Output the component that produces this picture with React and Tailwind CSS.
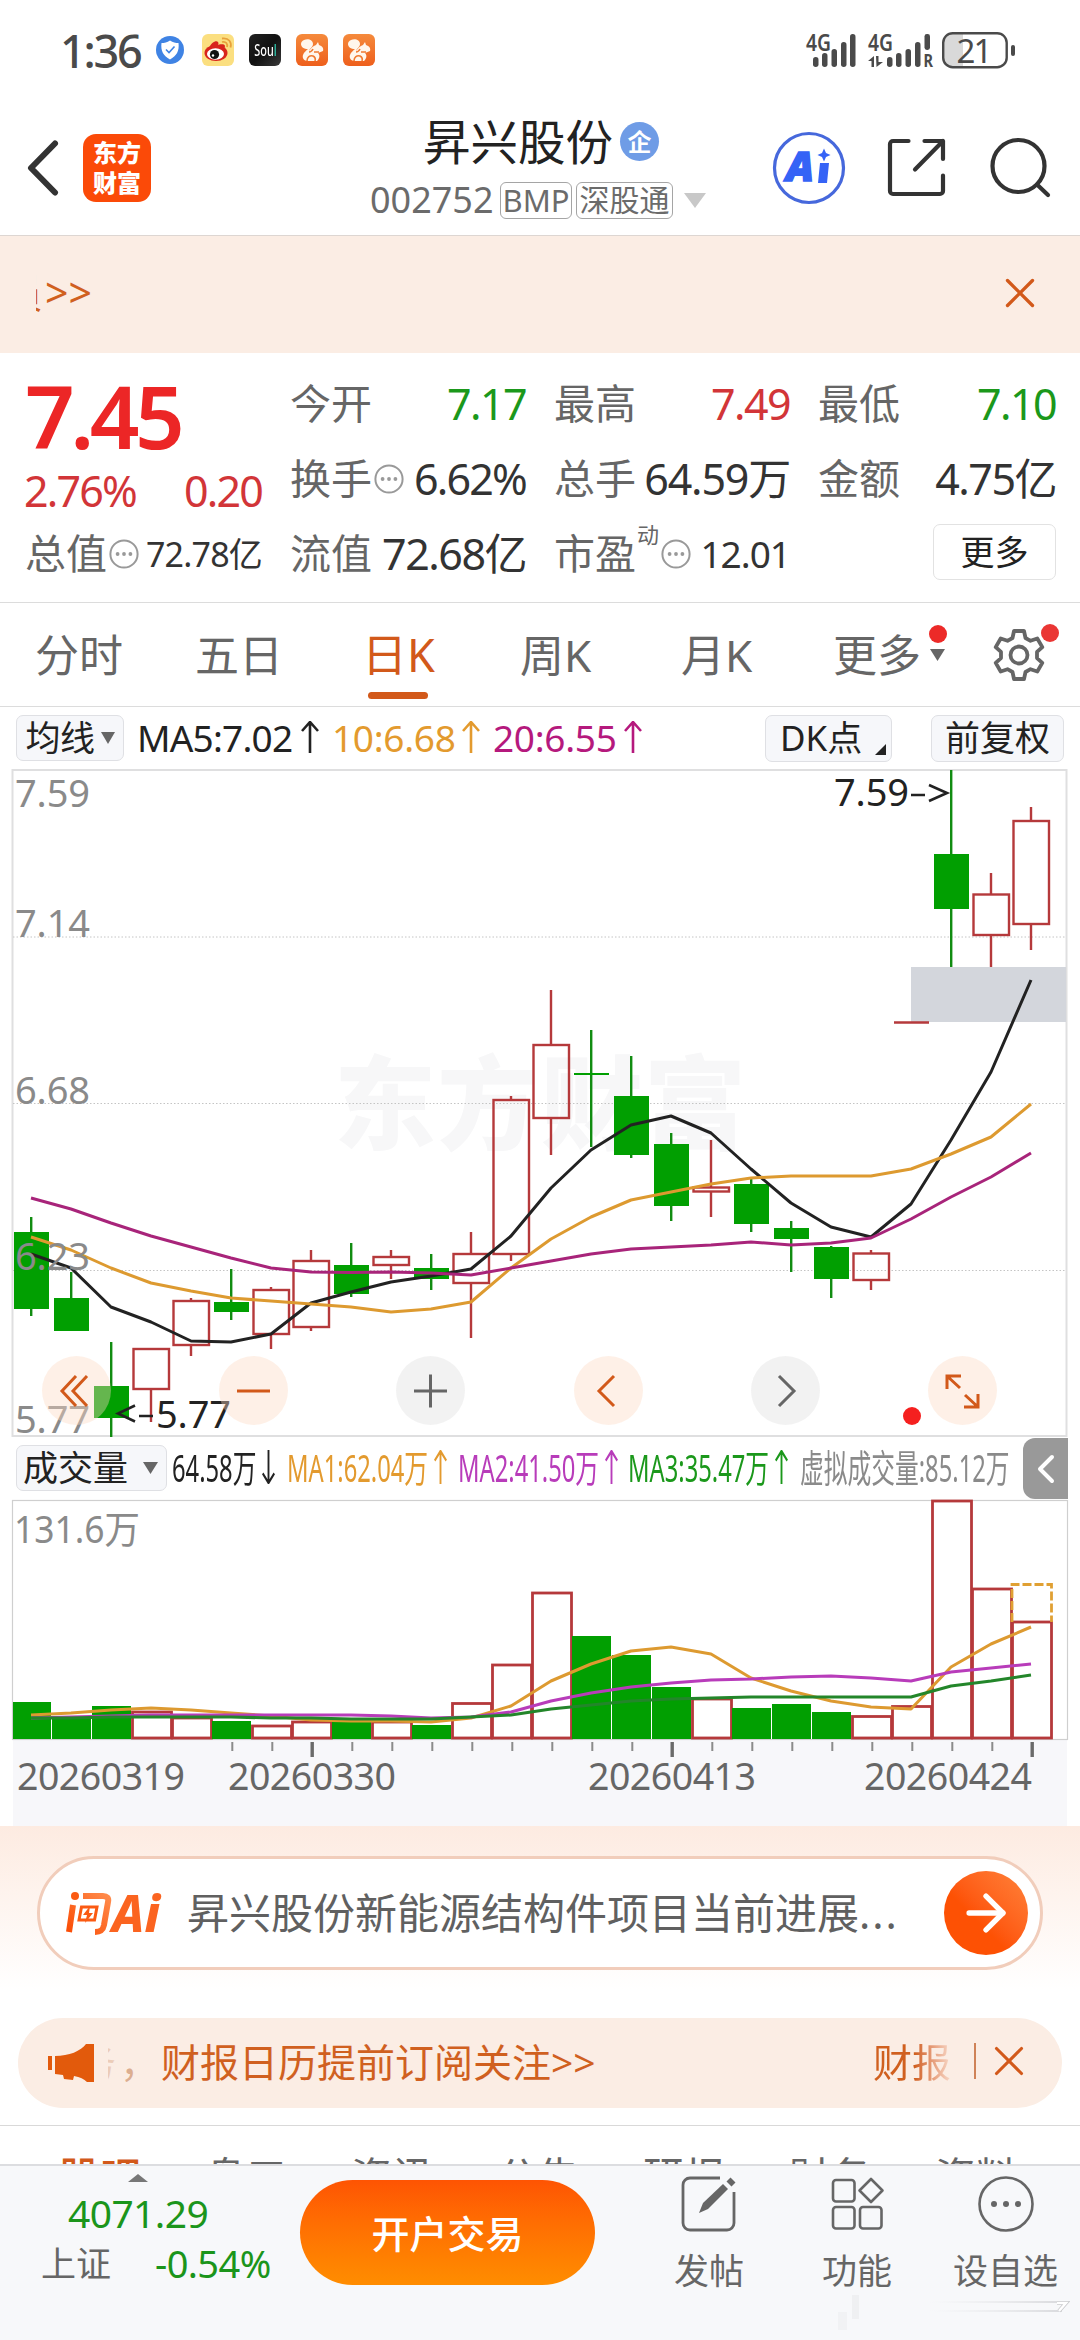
import { ArrowRight, X } from "lucide-react";

const RED = "#b5393b";
const GREEN = "#019f01";

// [type, high, bodyTop, bodyBottom, low]
const candles = [
  ["g", 1217, 1232, 1309, 1316],
  ["g", 1272, 1298, 1331, 1331],
  ["g", 1342, 1386, 1418, 1437],
  ["r", 1349, 1349, 1389, 1422],
  ["r", 1298, 1301, 1345, 1356],
  ["g", 1269, 1302, 1312, 1320],
  ["r", 1287, 1290, 1334, 1349],
  ["r", 1250, 1261, 1327, 1331],
  ["g", 1243, 1265, 1294, 1297],
  ["r", 1250, 1257, 1265, 1279],
  ["g", 1254, 1268, 1279, 1290],
  ["r", 1232, 1254, 1283, 1338],
  ["r", 1096, 1100, 1254, 1261],
  ["r", 990, 1045, 1118, 1155],
  ["g", 1030, 1073, 1075, 1147],
  ["g", 1056, 1096, 1155, 1158],
  ["g", 1133, 1144, 1206, 1221],
  ["r", 1140, 1187.5, 1191.5, 1217],
  ["g", 1178, 1184, 1224, 1232],
  ["g", 1221, 1228, 1239, 1272],
  ["g", 1246, 1247, 1279, 1298],
  ["r", 1250, 1253.5, 1280, 1290],
  ["flat", 1022.5, 1022.5, 1022.5, 1022.5],
  ["g", 770, 854, 909, 967],
  ["r", 873, 894.5, 935, 967],
  ["r", 807, 821, 924, 950],
];

const ma5 = [1254, 1268, 1307, 1322, 1341, 1342, 1334, 1303, 1292, 1282, 1276, 1269, 1236, 1188, 1150, 1125, 1116, 1133, 1169, 1203, 1227, 1237, 1204, 1140, 1072, 980];
const ma10 = [1237, 1250, 1268, 1283, 1291, 1298, 1301, 1304, 1307, 1312, 1309, 1302, 1268, 1239, 1217, 1200, 1192, 1184, 1178, 1176, 1176, 1176, 1169, 1154, 1137, 1104];
const ma20 = [1198, 1209, 1223, 1236, 1247, 1258, 1268, 1272, 1272.5, 1272, 1273, 1275, 1268, 1261, 1254, 1249, 1247, 1245, 1242, 1245, 1243, 1238, 1219, 1197, 1177, 1153];

const volumes = [
  ["g", 1702], ["g", 1717], ["g", 1706], ["r", 1712], ["r", 1718], ["g", 1721], ["r", 1726],
  ["r", 1722], ["g", 1721], ["r", 1722], ["g", 1725], ["r", 1703.5], ["r", 1665], ["r", 1593],
  ["g", 1636], ["g", 1655], ["g", 1687], ["r", 1699], ["g", 1708], ["g", 1704], ["g", 1712],
  ["r", 1716.5], ["r", 1706.5], ["r", 1501], ["r", 1589], ["r", 1622],
];

const vma1 = [1715, 1713, 1710, 1708, 1710, 1713, 1716, 1720, 1721, 1721, 1722, 1718, 1706, 1681, 1664, 1651, 1647, 1654, 1678, 1691, 1701, 1707, 1709, 1667, 1644, 1627];
const vma2 = [1718, 1717, 1716, 1715, 1715, 1715, 1715, 1715, 1715, 1716, 1718, 1717, 1712, 1701, 1693, 1687, 1683, 1680, 1679, 1677, 1676, 1678, 1681, 1672, 1668, 1664];
const vma3 = [1718, 1718, 1717, 1717, 1717, 1717, 1718, 1718, 1719, 1719, 1719, 1717, 1715, 1709, 1705, 1701, 1699, 1698, 1697, 1697, 1697, 1697, 1697, 1686, 1681, 1675];

const px = (i) => 31 + i * 40;
const toPoints = (list) => list.map((y, i) => `${px(i)},${y}`).join(" ");

function Arrow({ down, className }) {
  return (
    <svg viewBox="0 0 18 32" preserveAspectRatio="none" className={className} fill="none" stroke="currentColor" strokeWidth="2.6">
      <path d={down ? "M9 0V31M1 22l8 9 8-9" : "M9 32V1M1 10l8-9 8 9"} />
    </svg>
  );
}

function Triangle({ className, up }) {
  return (
    <svg viewBox="0 0 20 14" preserveAspectRatio="none" className={className} fill="currentColor">
      <path d={up ? "M0 14h20L10 0z" : "M0 0h20L10 14z"} />
    </svg>
  );
}

function Info({ className = "" }) {
  return (
    <svg viewBox="0 0 30 30" className={`h-[30px] w-[30px] shrink-0 ${className}`}>
      <circle cx="15" cy="15" r="13.6" fill="none" stroke="#999" strokeWidth="2" />
      <circle cx="8.6" cy="15" r="1.9" fill="#999" />
      <circle cx="15" cy="15" r="1.9" fill="#999" />
      <circle cx="21.4" cy="15" r="1.9" fill="#999" />
    </svg>
  );
}

function Squirrel() {
  return (
    <svg viewBox="0 0 32 32" className="h-8 w-8">
      <defs>
        <linearGradient id="uc" x1="0" y1="0" x2="0" y2="1">
          <stop offset="0" stopColor="#f58a3c" />
          <stop offset="1" stopColor="#ee5f1c" />
        </linearGradient>
      </defs>
      <rect width="32" height="32" rx="6" fill="url(#uc)" />
      <path d="M8 6c4-2 9 0 9 4 0 3-3 4-4 7 2-3 4-5 7-6l2-3 1 3c3 1 5 3 4 6l-5 2c2 2 2 5-1 8h-9c-4 0-6-3-5-6 1-3 3-4 5-6-4 0-7-2-7-5 0-2 1-3 3-4z" fill="#fff6ec" />
      <path d="M13 18c2 0 3-1 4-3M11 27c0-4 3-6 6-5 2 1 3 2 2 5M23 18h-5" fill="none" stroke="#f07a30" strokeWidth="1.600" />
    </svg>
  );
}

function StatusBar() {
  return (
    <div className="flex h-[100px] items-center pl-[60px] text-[#4a4a4a]">
      <span className="w-[96px] text-[45px] font-medium leading-none tracking-[-2.2px]">1:36</span>
      <svg viewBox="0 0 28 28" className="h-7 w-7">
        <circle cx="14" cy="14" r="14" fill="#3f83e4" />
        <path d="M14 4.500c3 2 5.500 2.500 8.500 2.500 1 8-2 13-8.500 16.500C7.500 20 4.500 15 5.500 7 8.500 7 11 6.500 14 4.500z" fill="#fff" />
        <path d="M10 13.500l3 3 5.500-6" fill="none" stroke="#3f83e4" strokeWidth="1.600" />
      </svg>
      <svg viewBox="0 0 32 32" className="ml-[18px] h-8 w-8">
        <rect width="32" height="32" rx="6" fill="#fbdf80" />
        <ellipse cx="14" cy="19" rx="11.500" ry="8" fill="#d8241c" />
        <path d="M7 14c2-5 7-8 9-6 1 1 0 3 0 3s6-2 7 1l-1 4z" fill="#d8241c" />
        <ellipse cx="13.500" cy="20" rx="8.500" ry="5.800" fill="#fff" />
        <circle cx="12.500" cy="20.500" r="4.600" fill="#111" />
        <circle cx="11" cy="21.500" r="1.200" fill="#fff" />
        <path d="M20 8c4-1 6 2 5 5M20 4.500c7-1 10 4 8.500 9" fill="none" stroke="#e8a13a" strokeWidth="1.800" />
      </svg>
      <div className="ml-[15px] flex h-8 w-8 items-center justify-center rounded-[6px] bg-linear-to-br from-[#222] via-[#111] to-[#3a3a3a]">
        <span className="inline-block scale-x-[0.68] text-[16px] font-medium leading-none text-white">
          Sou<span className="text-[#2fd0b5]">l</span>
        </span>
      </div>
      <div className="ml-[15px] flex gap-[15px]">
        <Squirrel />
        <Squirrel />
      </div>

      <svg viewBox="806 30 212 40" className="ml-[431px] h-10 w-[212px] overflow-visible" fill="#4a4a4a">
        <text x="806" y="51" fontSize="23" fontWeight="600" textLength="25" lengthAdjust="spacingAndGlyphs">4G</text>
        <rect x="813" y="57" width="5.500" height="10" rx="2.700" />
        <rect x="822" y="53" width="5.500" height="14" rx="2.700" />
        <rect x="831.500" y="49" width="5.500" height="18" rx="2.700" />
        <rect x="841" y="42" width="5.500" height="25" rx="2.700" />
        <rect x="850" y="34" width="5.500" height="33" rx="2.700" />
        <text x="868" y="51" fontSize="23" fontWeight="600" textLength="25" lengthAdjust="spacingAndGlyphs">4G</text>
        <path d="M868 61l6-5v11h-2.500v-6zM876 56h2.500v6h4.500l-6.500 5z" />
        <rect x="887" y="57" width="5.500" height="10" rx="2.700" />
        <rect x="896" y="53" width="5.500" height="14" rx="2.700" />
        <rect x="905.500" y="49" width="5.500" height="18" rx="2.700" />
        <rect x="915" y="42" width="5.500" height="25" rx="2.700" />
        <rect x="924.500" y="34" width="5.500" height="16" rx="2.400" />
        <text x="923.500" y="67" fontSize="18" fontWeight="700" textLength="9.500" lengthAdjust="spacingAndGlyphs">R</text>
        <path d="M952 34h11v33h-11a8 8 0 0 1-8-8V42a8 8 0 0 1 8-8z" fill="#d9d9d9" />
        <rect x="943.200" y="33.200" width="63.500" height="34" rx="9.500" fill="none" stroke="#4a4a4a" strokeWidth="2.400" />
        <text x="956.500" y="62.500" fontSize="33" textLength="36">21</text>
        <rect x="1011" y="45" width="4" height="11" rx="2" />
      </svg>
    </div>
  );
}

function Header() {
  return (
    <div className="flex h-[136px] items-center border-b border-[#ddd6d2] pl-[27px]">
      <svg viewBox="0 0 32 56" className="h-14 w-8" fill="none" stroke="#333" strokeWidth="6" strokeLinecap="round" strokeLinejoin="round">
        <path d="M28 3.500L4 28l24 24.500" />
      </svg>
      <div className="ml-6 flex h-[68px] w-[68px] flex-col items-center justify-center rounded-[13px] bg-[#fb4a08] text-[24px] font-black leading-[30px] text-white">
        <span>东方</span>
        <span>财富</span>
      </div>
      <div className="ml-[219px] w-[337px]">
        <div className="ml-[53px] flex h-[50px] items-center">
          <span className="whitespace-nowrap text-[47.500px] leading-none text-[#222]">昇兴股份</span>
          <span className="ml-[7px] flex h-[39px] w-[39px] shrink-0 items-center justify-center rounded-full bg-[#6f9ce6] text-[24px] font-bold leading-none text-white">企</span>
        </div>
        <div className="mt-[15px] flex h-[37px] items-center leading-none text-[#6b6b6b]">
          <span className="w-[130px] text-[36px]">002752</span>
          <span className="flex h-[37px] w-[72px] items-center justify-center rounded-[6px] border-[1.5px] border-[#a5a5a5] text-[31px]">BMP</span>
          <span className="ml-1 flex h-[37px] w-[97px] items-center justify-center whitespace-nowrap rounded-[6px] border-[1.5px] border-[#a5a5a5] text-[30px]">深股通</span>
          <Triangle className="ml-[11px] h-[15px] w-[22px] text-[#c8c8c8]" />
        </div>
      </div>
      <svg viewBox="772 131 74 74" className="ml-[65px] h-[74px] w-[74px]">
        <circle cx="809" cy="168" r="34.500" fill="#fff" stroke="#4668dc" strokeWidth="3.200" />
        <text x="786" y="181" fontSize="41" fontWeight="900" fontStyle="italic" fill="#3563f6" stroke="#3563f6" strokeWidth="1.500" textLength="28" lengthAdjust="spacingAndGlyphs">A</text>
        <path d="M820 163h9l-2 20h-9zM824 148.500l2 4.500 4.500 2-4.500 2-2 4.500-2-4.500-4.500-2 4.500-2z" fill="#3563f6" />
      </svg>
      <svg viewBox="886 138 62 62" className="ml-[40px] h-[62px] w-[62px]" fill="none" stroke="#333" strokeWidth="4.200" strokeLinecap="round" strokeLinejoin="round">
        <path d="M908.500 142H893a3 3 0 0 0-3 3v47a3 3 0 0 0 3 3h47a3 3 0 0 0 3-3v-15.500M924.500 142H943v18M943 142l-28 28.500" />
      </svg>
      <svg viewBox="990 136 62 64" className="ml-[42px] h-16 w-[62px]" fill="none" stroke="#333" strokeWidth="4.200" strokeLinecap="round">
        <circle cx="1018.500" cy="166" r="26" />
        <path d="M1037 184.500l11 10.500" />
      </svg>
    </div>
  );
}

function Stat({ label, info, sup, children }) {
  return (
    <div className="flex h-[75px] items-center whitespace-nowrap leading-none">
      <span className="text-[41px] text-[#666]">{label}</span>
      {sup && <span className="mb-[40px] ml-px text-[22px] text-[#666]">{sup}</span>}
      {info && <Info className="ml-[2px]" />}
      <span className="ml-auto">{children}</span>
    </div>
  );
}

function Quote() {
  return (
    <div className="flex h-[249px] gap-7 pl-[25px] pt-[13px] leading-none">
      <div className="w-[237px]">
        <div className="flex h-[99px] items-center text-[87px] font-semibold tracking-[-4.500px] text-[#ec2626]">7.45</div>
        <div className="-ml-px flex h-[51px] items-center justify-between text-[43px] tracking-[-1.800px] text-[#d23538]">
          <span>2.76%</span>
          <span>0.20</span>
        </div>
        <Stat label="总值" info>
          <span className="text-[34px] tracking-[-0.8px] text-[#333]">72.78亿</span>
        </Stat>
      </div>
      <div className="w-[236px]">
        <Stat label="今开"><span className="text-[43px] tracking-[-1.600px] text-[#1b981b]">7.17</span></Stat>
        <Stat label="换手" info><span className="text-[43px] tracking-[-1.800px] text-[#333]">6.62%</span></Stat>
        <Stat label="流值"><span className="text-[43px] tracking-[-1.500px] text-[#333]">72.68亿</span></Stat>
      </div>
      <div className="w-[236px]">
        <Stat label="最高"><span className="text-[43px] tracking-[-1.600px] text-[#d23538]">7.49</span></Stat>
        <Stat label="总手"><span className="text-[43px] tracking-[-1.200px] text-[#333]">64.59万</span></Stat>
        <Stat label="市盈" sup="动" info><span className="text-[37px] tracking-[-1px] text-[#333]">12.01</span></Stat>
      </div>
      <div className="w-[238px]">
        <Stat label="最低"><span className="text-[43px] tracking-[-1.600px] text-[#1b981b]">7.10</span></Stat>
        <Stat label="金额"><span className="text-[43px] tracking-[-1.500px] text-[#333]">4.75亿</span></Stat>
        <div className="flex h-[75px] items-center justify-end">
          <button className="mb-1 h-[56px] w-[123px] rounded-[7px] border-[1.5px] border-[#e2e2e2] text-[34px] text-[#222]">更多</button>
        </div>
      </div>
    </div>
  );
}

function PeriodTabs() {
  return (
    <div className="flex h-[105px] items-center whitespace-nowrap border-y border-[#dcdcdc] pl-[35px] text-[44px] leading-none text-[#666]">
      <span className="w-[160px]">分时</span>
      <span className="w-[167px]">五日</span>
      <span className="relative w-[158px] text-[45px] text-[#d2591a]">
        日K
        <i className="absolute -bottom-[22px] left-[6px] h-[7px] w-[60px] rounded-full bg-[#d2591a]" />
      </span>
      <span className="w-[161px]">周K</span>
      <span className="w-[152px]">月K</span>
      <span className="relative w-[159px]">
        更多
        <Triangle className="absolute left-[97px] top-[16px] h-[12px] w-[15px]" />
        <i className="absolute -top-[8px] left-[96px] h-[18px] w-[18px] rounded-full bg-[#ec2a28]" />
      </span>
      <span className="relative">
        <svg viewBox="0 0 54 54" className="h-[54px] w-[54px]" fill="none" stroke="#666" strokeWidth="3.800" strokeLinejoin="round">
          <path d="M22 3h10l1.500 7 5 2.800 6.800-2.300 5 8.600-5.300 4.800v6.200l5.300 4.800-5 8.600-6.800-2.300-5 2.800L32 51H22l-1.500-7-5-2.800-6.800 2.300-5-8.600L9 30.100v-6.200l-5.300-4.800 5-8.600 6.800 2.300 5-2.800z" />
          <circle cx="27" cy="27" r="8.500" />
        </svg>
        <i className="absolute -top-[4px] left-[49px] h-[18px] w-[18px] rounded-full bg-[#ea3634]" />
      </span>
    </div>
  );
}

function AverageBar() {
  return (
    <div className="flex h-[62px] items-center whitespace-nowrap pl-4 text-[35px] leading-none">
      <button className="flex h-[46px] w-[108px] items-center justify-center rounded-[7px] border border-[#dfe0e4] bg-[#f6f7fa] pb-px text-[#222]">
        <span className="tracking-[-0.5px]">均线</span>
        <Triangle className="ml-[6px] h-[12px] w-[14px] text-[#666]" />
      </button>
      <div className="ml-[13px] flex w-[195px] items-center pb-[2px] text-[37px] text-[#222]">
        <span className="w-[164px] tracking-[-0.8px]">MA5:7.02</span>
        <Arrow className="h-8 w-[18px]" />
      </div>
      <div className="flex w-[161px] items-center pb-[2px] text-[37px] text-[#e39a2e]">
        <span className="w-[130px] tracking-[-0.3px]">10:6.68</span>
        <Arrow className="h-8 w-[18px]" />
      </div>
      <div className="flex w-[272px] items-center pb-[2px] text-[37px] text-[#b5197d]">
        <span className="w-[131px] tracking-[-0.3px]">20:6.55</span>
        <Arrow className="h-8 w-[18px]" />
      </div>
      <button className="relative flex h-[47px] w-[127px] items-center rounded-[7px] border border-[#dfe0e4] bg-[#f6f7fa] pb-px pl-[14px] text-[#222]">
        DK点
        <svg viewBox="0 0 10 10" className="absolute bottom-[6px] right-[5px] h-[11px] w-[11px]"><path d="M10 0v10H0z" fill="#222" /></svg>
      </button>
      <button className="ml-[39px] h-[47px] w-[133px] rounded-[7px] border border-[#dfe0e4] bg-[#f6f7fa] pb-px text-[#222]">前复权</button>
    </div>
  );
}

function Candle({ x, data }) {
  const [type, high, top, bottom, low] = data;
  if (type === "flat") {
    return <path d={`M${x - 17} ${top}h35`} stroke={RED} strokeWidth="2.6" />;
  }
  if (type === "g") {
    return (
      <g fill={GREEN}>
        <rect x={x - 1} y={high} width="2.400" height={low - high} fill="#118c11" />
        <rect x={x - 17} y={top} width="35" height={bottom - top} />
      </g>
    );
  }
  return (
    <g stroke={RED} strokeWidth="2.400" fill="none">
      <path d={`M${x} ${high}V${top}M${x} ${bottom}V${low}`} />
      <rect x={x - 17.5} y={top} width="35.500" height={bottom - top} />
    </g>
  );
}

const controls = [
  { key: "fast", bg: "bg-[#fdd9c4]/40", color: "#d2591a", d: "M34 20L20 35l14 15M45 20L31 35l14 15" },
  { key: "minus", bg: "bg-[#fdd9c4]/40", color: "#d2591a", d: "M18 35h33" },
  { key: "plus", bg: "bg-[#dedede]/40", color: "#666", d: "M18 35h33M34.500 18.500v33" },
  { key: "left", bg: "bg-[#fdd9c4]/40", color: "#d2591a", d: "M40 20L25 35l15 15" },
  { key: "right", bg: "bg-[#dedede]/40", color: "#666", d: "M28 20l15 15-15 15" },
  { key: "full", bg: "bg-[#fdd9c4]/40", color: "#d2591a", d: "M19 33V20h14M19 20l13 12M50 38v13H36M50 51L37 39" },
];

function PriceChart() {
  return (
    <div className="relative h-[668px]">
      <svg viewBox="0 769 1080 668" className="block h-[668px] w-[1080px]">
        <rect x="12.500" y="770" width="1054" height="666" fill="none" stroke="#dfdfe0" strokeWidth="2" />
        <text x="334" y="1142" fontSize="102" fontWeight="900" fill="#f7f7f8" textLength="412">东方财富</text>
        {[937, 1103.5, 1270.5].map((y) => (
          <path key={y} d={`M13 ${y}H1066`} stroke="#c4c4c4" strokeWidth="1" strokeDasharray="1.500 2" />
        ))}
        <rect x="911" y="967" width="155" height="55" fill="#d3d6dc" />
        {candles.map((c, i) => (
          <Candle key={i} x={px(i)} data={c} />
        ))}
        <g fill="none" strokeWidth="3" strokeLinejoin="round">
          <polyline points={toPoints(ma5)} stroke="#222" />
          <polyline points={toPoints(ma10)} stroke="#dd9a30" />
          <polyline points={toPoints(ma20)} stroke="#a8247a" />
        </g>
        <g fontSize="38" fill="#8a8a8a">
          <text x="15" y="807" textLength="75">7.59</text>
          <text x="15" y="937" textLength="75">7.14</text>
          <text x="15" y="1104" textLength="75">6.68</text>
          <text x="15" y="1270" textLength="75">6.23</text>
          <text x="15" y="1433" textLength="75">5.77</text>
        </g>
        <g fontSize="38" fill="#222">
          <text x="834" y="805.500" textLength="75">7.59</text>
          <path d="M911 795h14M929 785l18 8-18 8" fill="none" stroke="#222" strokeWidth="2.600" />
          <path d="M135 1405.500l-17 8 17 8M139 1416h14" fill="none" stroke="#222" strokeWidth="2.600" />
          <text x="156" y="1427.500" textLength="75">5.77</text>
        </g>
      </svg>
      <div className="absolute left-[42px] top-[587px] flex w-[955px] justify-between">
        {controls.map((c) => (
          <button key={c.key} className={`h-[69px] w-[69px] rounded-full ${c.bg}`}>
            <svg viewBox="0 0 69 69" className="h-[69px] w-[69px]" fill="none" stroke={c.color} strokeWidth="3">
              <path d={c.d} />
            </svg>
          </button>
        ))}
      </div>
      <i className="absolute left-[903px] top-[638px] h-[18px] w-[18px] rounded-full bg-[#f5201f]" />
    </div>
  );
}

function VolumeItem({ text, className, textClass, down, arrow = true }) {
  return (
    <div className={`flex shrink-0 items-center pb-[2px] ${className}`}>
      <span className={`whitespace-nowrap ${textClass}`}>
        <span className="inline-block origin-left scale-x-[0.625]">{text}</span>
      </span>
      {arrow && <Arrow down={down} className="h-[34px] w-[13px] shrink-0" />}
    </div>
  );
}

function VolumeBar() {
  return (
    <div className="flex h-[62px] items-center overflow-hidden pl-4 text-[38px] leading-none">
      <button className="flex h-[46px] w-[151px] shrink-0 items-center whitespace-nowrap rounded-[7px] border border-[#dfe0e4] bg-[#f6f7fa] pb-px pl-[6px] text-[35px] text-[#222]">
        成交量
        <Triangle className="ml-[15px] h-[12px] w-[15px] text-[#666]" />
      </button>
      <VolumeItem text="64.58万" down className="ml-[5px] w-[115px] text-[#222]" textClass="w-[90px]" />
      <VolumeItem text="MA1:62.04万" className="w-[171px] text-[#e39a2e]" textClass="w-[147px]" />
      <VolumeItem text="MA2:41.50万" className="w-[170px] text-[#b83cba]" textClass="w-[147px]" />
      <VolumeItem text="MA3:35.47万" className="w-[172px] text-[#1b981b]" textClass="w-[147px]" />
      <VolumeItem text="虚拟成交量:85.12万" arrow={false} className="w-[223px] text-[#8a8a8a]" textClass="w-[223px]" />
      <button className="h-[61px] w-[45px] shrink-0 rounded-l-[12px] bg-[#999]">
        <svg viewBox="0 0 45 61" className="h-[61px] w-[45px]" fill="none" stroke="#fff" strokeWidth="4" strokeLinecap="round" strokeLinejoin="round">
          <path d="M29 19L17 31l12 12" />
        </svg>
      </button>
    </div>
  );
}

function VolumeChart() {
  const dates = [
    [17, "20260319"],
    [228, "20260330"],
    [588, "20260413"],
    [864, "20260424"],
  ];
  return (
    <svg viewBox="0 1499 1080 327" className="block h-[327px] w-[1080px]">
      <rect x="13" y="1740" width="1054" height="86" fill="#f7f7fa" />
      <rect x="12.500" y="1500.500" width="1055" height="239" fill="#fff" stroke="#cfcfcf" strokeWidth="1.200" />
      <text x="14" y="1543" fontSize="38" fill="#8a8a8a" textLength="126" lengthAdjust="spacingAndGlyphs">131.6万</text>
      {volumes.map(([type, top], i) =>
        type === "g" ? (
          <rect key={i} x={i === 0 ? 13 : px(i) - 19} y={top} width={i === 0 ? 38 : 39} height={1739 - top} fill={GREEN} />
        ) : (
          <rect key={i} x={px(i) - 18.5} y={top} width="39" height={1738 - top} fill="none" stroke={RED} strokeWidth="2.800" />
        )
      )}
      <path d="M1012 1622v-37.500h39.500V1622" fill="none" stroke="#e0a033" strokeWidth="2.800" strokeDasharray="9 3" />
      <g fill="none" strokeWidth="3" strokeLinejoin="round">
        <polyline points={toPoints(vma1)} stroke="#dd9a30" />
        <polyline points={toPoints(vma2)} stroke="#b83cba" />
        <polyline points={toPoints(vma3)} stroke="#23862a" />
      </g>
      {volumes.map((_, i) => {
        if (i < 5) return null;
        const major = (i - 7) % 9 === 0;
        return <rect key={i} x={px(i) + (major ? -0.5 : 0.3)} y="1742" width={major ? 3.4 : 2} height={major ? 15 : 9} fill={major ? "#6a6a6a" : "#8a8a8a"} />;
      })}
      {dates.map(([x, label]) => (
        <text key={label} x={x} y="1790" fontSize="37.500" fill="#666" textLength="168">{label}</text>
      ))}
    </svg>
  );
}

function AskAi() {
  return (
    <div className="h-[192px] bg-linear-to-b from-[#fdebe1] to-white to-85% px-[37px] pt-[30px]">
      <div className="flex h-[114px] items-center rounded-full border-[3px] border-[#f1cdbb] bg-white pl-[24px]">
        <svg viewBox="0 0 102 48" className="h-12 w-[102px] overflow-visible">
          <defs>
            <linearGradient id="ask" x1="0" y1="1" x2="1" y2="0">
              <stop offset="0" stopColor="#fb4d06" />
              <stop offset="1" stopColor="#ff8a4a" />
            </linearGradient>
          </defs>
          <path d="M9 16L5 43M19 7h20c4 0 6 2 5 6l-4 23c-1 5-3 7-9 7" fill="none" stroke="url(#ask)" strokeWidth="6" />
          <circle cx="11" cy="7" r="4" fill="#fb5a12" />
          <path d="M17.500 18H33l-2.500 13H15z" fill="none" stroke="#fb5a12" strokeWidth="3" />
          <path d="M26 17l-7 9h4l-2 8 8-10h-4z" fill="#fb5a12" />
          <text x="48" y="43" fontSize="52" fontWeight="800" fontStyle="italic" fill="#fb6420" textLength="48" lengthAdjust="spacingAndGlyphs">Ai</text>
        </svg>
        <span className="ml-[21px] w-[757px] whitespace-nowrap text-[42px] leading-none text-[#606060]">
          昇兴股份新能源结构件项目当前进展<span className="tracking-[2px]">...</span>
        </span>
        <span className="flex h-[84px] w-[84px] shrink-0 items-center justify-center rounded-full bg-linear-to-bl from-[#ff8238] to-[#fd5104] to-60%">
          <ArrowRight size={58} strokeWidth={2.2} color="#fff" />
        </span>
      </div>
    </div>
  );
}

function Notice() {
  return (
    <div className="mx-[18px] flex h-[90px] items-center rounded-full bg-[#fbede4] pb-1 pl-[30px] text-[39px] leading-none text-[#d0601f]">
      <svg viewBox="0 0 46 40" className="mt-1 h-10 w-[46px]" fill="#e25a0c">
        <path d="M0 13h4v14H0zM7 13c14 0 26-5 31-12h8v38h-7c-3-3-7-5-13-6l-1 4-9-1-1-4-8-1z" />
      </svg>
      <div className="ml-[14px] w-[8px] overflow-hidden">
        <span className="-ml-[31px] block w-[39px] text-[#ecccb8]">务</span>
      </div>
      <span className="w-[45px] pl-[4px] text-[#dcae90]">，</span>
      <span className="w-[712px] whitespace-nowrap">财报日历提前订阅关注&gt;&gt;</span>
      <span className="w-[84px] overflow-hidden whitespace-nowrap bg-linear-to-r from-[#d0601f] from-50% to-[#fbede4] bg-clip-text text-transparent">财报日</span>
      <i className="ml-[17px] h-[36px] w-[1.5px] bg-[#cf8257]" />
      <X size={50} strokeWidth={1.5} color="#d2591a" className="ml-[8px]" />
    </div>
  );
}

function SectionTabs() {
  const tabs = ["盘口", "资讯", "公告", "研报", "财务", "资料"];
  return (
    <div className="mt-[17px] flex h-[39px] items-start gap-[64px] overflow-hidden whitespace-nowrap border-t border-[#d9d9d9] pl-[59px] pt-[30px] text-[41px] leading-none text-[#666]">
      <span className="font-medium text-[#d2591a]">股吧</span>
      {tabs.map((t) => (
        <span key={t}>{t}</span>
      ))}
    </div>
  );
}

function BottomBar() {
  return (
    <div className="relative flex h-[176px] border-t-2 border-[#dcdde0] bg-[#f7f8fa] leading-none text-[#666]">
      <div className="w-[300px]">
        <Triangle up className="ml-[128px] mt-[8px] h-[8px] w-[20px] text-[#777]" />
        <div className="ml-[68px] mt-[11px] text-[39px] tracking-[-0.6px] text-[#1b951b]">4071.29</div>
        <div className="mt-[12px] flex items-center pl-[41px] text-[35px]">
          <span className="w-[114px]">上证</span>
          <span className="text-[38px] tracking-[-0.6px] text-[#1b951b]">-0.54%</span>
        </div>
      </div>
      <button className="mt-[14px] h-[105px] w-[295px] rounded-full bg-linear-to-b from-[#fe5403] to-[#ff8d00] text-[38px] font-medium text-white">开户交易</button>
      <div className="ml-[40px] flex w-[148px] flex-col items-center text-[35px]">
        <svg viewBox="682 2175 58 58" className="mt-[9px] h-[58px] w-[58px]" fill="none" stroke="#666" strokeWidth="2.800" strokeLinecap="butt">
          <path d="M722 2178h-30a7 7 0 0 0-7 7v38a7 7 0 0 0 7 7h37a7 7 0 0 0 7-7v-31" />
          <path d="M731 2184l4-4" strokeWidth="7" />
          <path d="M701 2213l4-10 20-19 5 5-20 20z" fill="#666" stroke="none" />
        </svg>
        <span className="mt-[20px]">发帖</span>
      </div>
      <div className="flex w-[148px] flex-col items-center text-[35px]">
        <svg viewBox="829 2175 58 58" className="mt-[9px] h-[58px] w-[58px]" fill="none" stroke="#666" strokeWidth="2.600">
          <rect x="834" y="2180" width="21.500" height="21.500" rx="3" />
          <rect x="834" y="2207" width="21.500" height="21.500" rx="3" />
          <rect x="861" y="2207" width="21.500" height="21.500" rx="3" />
          <path d="M872 2179l11.500 11.500-11.500 11.500-11.500-11.500z" strokeLinejoin="round" />
        </svg>
        <span className="mt-[20px]">功能</span>
      </div>
      <div className="flex w-[149px] flex-col items-center whitespace-nowrap text-[35px]">
        <svg viewBox="0 0 58 58" className="mt-[9px] h-[58px] w-[58px]" fill="#666">
          <circle cx="29" cy="29" r="26.500" fill="none" stroke="#666" strokeWidth="2.600" />
          <circle cx="17" cy="29" r="3" />
          <circle cx="29" cy="29" r="3" />
          <circle cx="41" cy="29" r="3" />
        </svg>
        <span className="mt-[20px]">设自选</span>
      </div>
      {/* faint leftover mark in the corner */}
      <svg viewBox="830 2292 240 42" className="absolute bottom-[6px] right-[10px] h-[42px] w-[240px]">
        <defs>
          <linearGradient id="mark" x1="0" y1="0" x2="1" y2="0">
            <stop offset="0" stopColor="#e9eaec" stopOpacity="0" />
            <stop offset="1" stopColor="#d9dadd" />
          </linearGradient>
        </defs>
        <rect x="930" y="2301" width="132" height="2" fill="url(#mark)" />
        <rect x="930" y="2310" width="132" height="2" fill="url(#mark)" />
        <rect x="852" y="2295" width="7" height="24" fill="#eff0f2" />
        <rect x="838" y="2312" width="9" height="18" fill="#f1f2f4" />
        <path d="M1057 2303h9l-7 8" fill="none" stroke="#c9cacd" strokeWidth="4" />
        <path d="M1057 2303h9l-7 8" fill="none" stroke="#fff" strokeWidth="2.400" />
      </svg>
    </div>
  );
}

export default function App() {
  return (
    <div className="h-[2340px] w-[1080px] overflow-hidden bg-white font-['Noto_Sans','Noto_Sans_CJK_SC',sans-serif]">
      <StatusBar />
      <Header />
      <div className="flex h-[117px] items-center justify-between bg-[#fbede4] pb-[4px] pl-[36px] pr-[35px] text-[#d0601f]">
        <div className="flex items-center text-[41px] leading-none">
          <span className="flex w-[7px] justify-end overflow-hidden">员</span>
          <span className="ml-[2px]">&gt;&gt;</span>
        </div>
        <X size={50} strokeWidth={1.6} color="#d2591a" />
      </div>
      <Quote />
      <PeriodTabs />
      <AverageBar />
      <PriceChart />
      <VolumeBar />
      <VolumeChart />
      <AskAi />
      <Notice />
      <SectionTabs />
      <BottomBar />
    </div>
  );
}
